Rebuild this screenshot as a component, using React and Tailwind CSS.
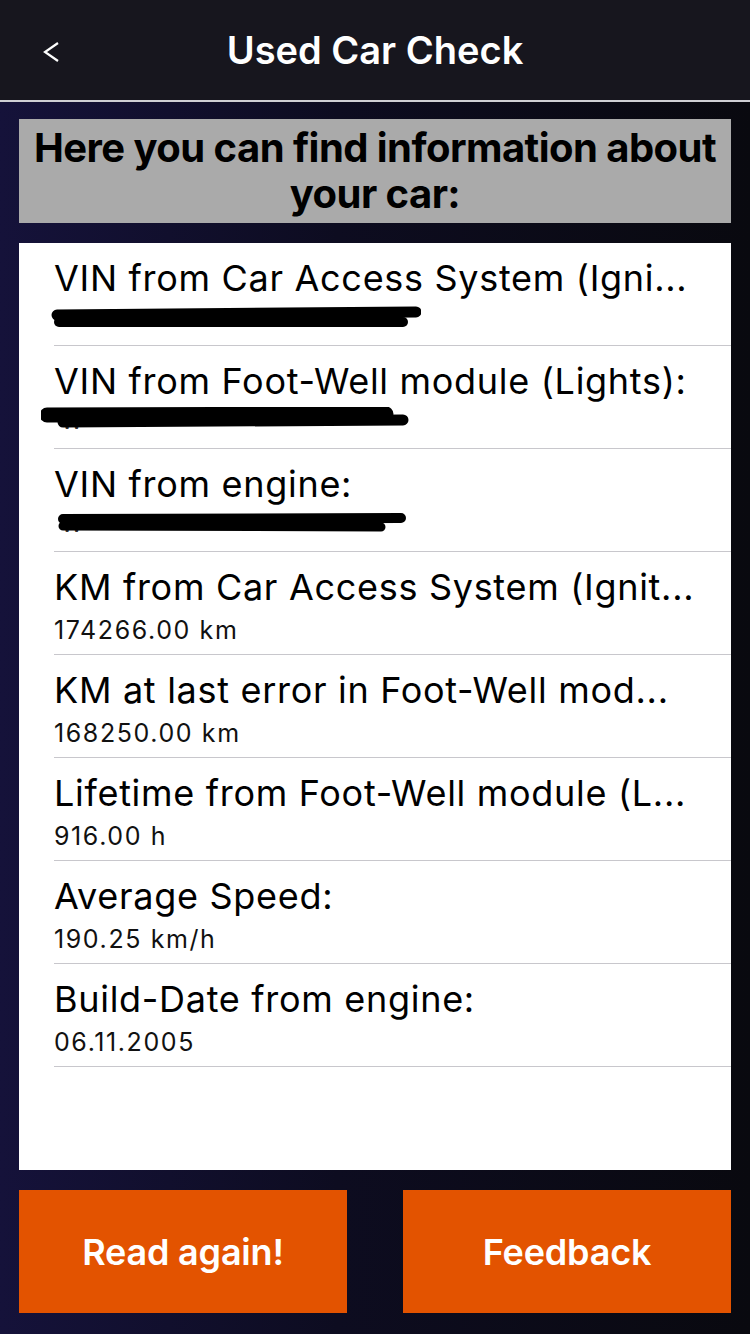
import React from 'react';

const font = { fontFamily: 'Inter, "Noto Sans", sans-serif' };

const rows = [
  { title: 'VIN from Car Access System (Igni...', redact: 1 },
  { title: 'VIN from Foot-Well module (Lights):', redact: 2 },
  { title: 'VIN from engine:', redact: 3 },
  { title: 'KM from Car Access System (Ignit...', value: '174266.00 km' },
  { title: 'KM at last error in Foot-Well mod...', value: '168250.00 km' },
  { title: 'Lifetime from Foot-Well module (L...', value: '916.00 h' },
  { title: 'Average Speed:', value: '190.25 km/h' },
  { title: 'Build-Date from engine:', value: '06.11.2005' },
];

// scribbled-out VINs
const Redaction = ({ kind }) => {
  const strokes = {
    1: [
      [16, 11, 375, 8, 11],
      [18, 18, 362, 18, 10],
    ],
    2: [
      [6, 8, 345, 7, 15],
      [22, 15, 362, 13, 11],
    ],
    3: [
      [22, 9, 360, 8, 10],
      [22, 16, 340, 17, 9],
    ],
  }[kind];
  return (
    <svg width="380" height="26" viewBox="0 0 380 26" className="block -ml-[13px] mt-[4px]">
      <text x="20" y="22" fontSize="22" fill="#333" fontFamily="Inter, sans-serif">W</text>
      {strokes.map(([x1, y1, x2, y2, w], i) => (
        <line key={i} x1={x1} y1={y1} x2={x2} y2={y2} stroke="#000" strokeWidth={w} strokeLinecap="round" />
      ))}
    </svg>
  );
};

const InfoRow = ({ title, value, redact }) => (
  <div className="h-[103px] pl-[35px] flex flex-col">
    <div className="flex-1 flex flex-col pt-[13px]">
      <div className="text-[36px] leading-[44px] text-black whitespace-nowrap tracking-[0.7px]">{title}</div>
      {redact ? (
        <Redaction kind={redact} />
      ) : (
        <div className="text-[25px] leading-[30px] text-[#111] mt-[6px] tracking-[1.6px]">{value}</div>
      )}
    </div>
    <div className="h-px bg-[#c8c7cc]" />
  </div>
);

export default function App() {
  return (
    <div
      className="w-[750px] h-[1334px] flex flex-col bg-[linear-gradient(90deg,#15123a_0%,#0d0c20_45%,#09090f_100%)]"
      style={font}
    >
      {/* nav bar */}
      <div className="h-[102px] bg-[#17161e] border-b-2 border-[#cfcfd4] flex items-center relative">
        <svg className="absolute left-[42px] top-[41px]" width="18" height="22" viewBox="0 0 18 22">
          <polyline points="16,2 3,11 16,20" fill="none" stroke="#fff" strokeWidth="2.2" />
        </svg>
        <div className="flex-1 text-center text-white font-semibold text-[38px] tracking-[0px]">Used Car Check</div>
      </div>

      <div className="flex-1 flex flex-col px-[19px] pt-[17px] pb-[20px]">
        <div className="h-[104px] bg-[#aaaaaa] flex items-center justify-center text-center">
          <div className="font-bold text-[40px] leading-[46px] text-black tracking-[-0.55px]">
            Here you can find information about
            <br />
            your car:
          </div>
        </div>

        <div className="mt-[20px] h-[927px] bg-white flex flex-col">
          {rows.map((r, i) => (
            <InfoRow key={i} {...r} />
          ))}
        </div>

        <div className="mt-[20px] flex gap-[56px]">
          <button className="flex-1 h-[123px] bg-[#e35300] text-white font-semibold text-[36px] tracking-[-0.2px]">
            Read again!
          </button>
          <button className="flex-1 h-[123px] bg-[#e35300] text-white font-semibold text-[36px] tracking-[-0.2px]">
            Feedback
          </button>
        </div>
      </div>
    </div>
  );
}
